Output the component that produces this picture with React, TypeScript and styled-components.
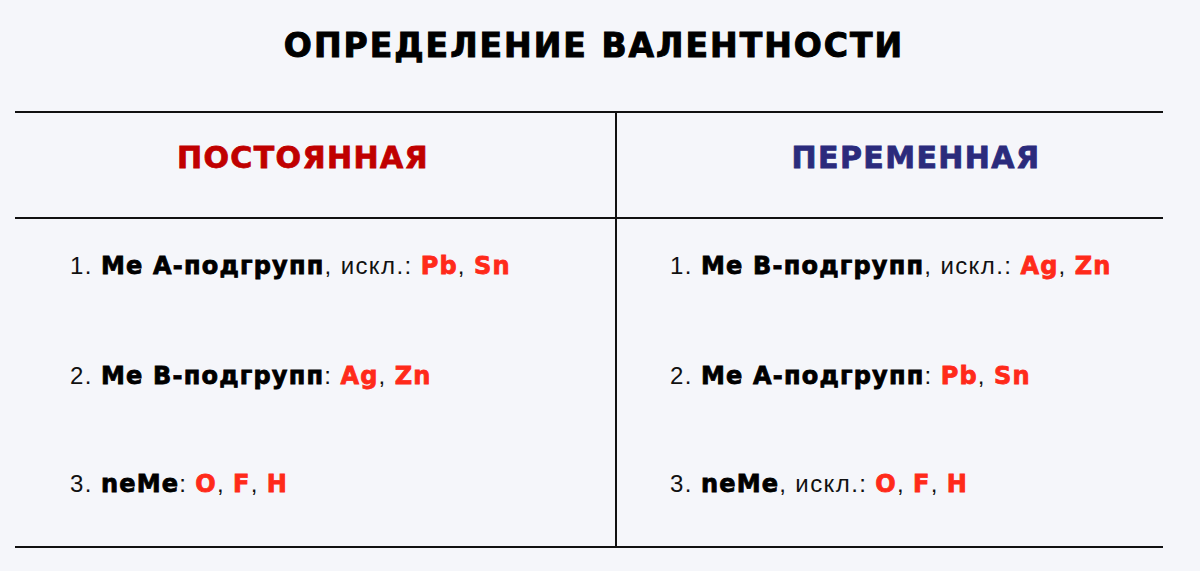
import styled, { createGlobalStyle } from 'styled-components'

const GlobalStyle = createGlobalStyle`
  html, body {
    margin: 0;
    padding: 0;
    background: #f5f6fa;
  }
`

type Part = { text: string; kind?: 'bold' | 'el' }

const constant: Part[][] = [
  [{ text: '1. ' }, { text: 'Me А-подгрупп', kind: 'bold' }, { text: ', искл.: ' }, { text: 'Pb', kind: 'el' }, { text: ', ' }, { text: 'Sn', kind: 'el' }],
  [{ text: '2. ' }, { text: 'Me В-подгрупп', kind: 'bold' }, { text: ': ' }, { text: 'Ag', kind: 'el' }, { text: ', ' }, { text: 'Zn', kind: 'el' }],
  [{ text: '3. ' }, { text: 'neMe', kind: 'bold' }, { text: ': ' }, { text: 'O', kind: 'el' }, { text: ', ' }, { text: 'F', kind: 'el' }, { text: ', ' }, { text: 'H', kind: 'el' }],
]

const variable: Part[][] = [
  [{ text: '1. ' }, { text: 'Me В-подгрупп', kind: 'bold' }, { text: ', искл.: ' }, { text: 'Ag', kind: 'el' }, { text: ', ' }, { text: 'Zn', kind: 'el' }],
  [{ text: '2. ' }, { text: 'Me А-подгрупп', kind: 'bold' }, { text: ': ' }, { text: 'Pb', kind: 'el' }, { text: ', ' }, { text: 'Sn', kind: 'el' }],
  [{ text: '3. ' }, { text: 'neMe', kind: 'bold' }, { text: ', искл.: ' }, { text: 'O', kind: 'el' }, { text: ', ' }, { text: 'F', kind: 'el' }, { text: ', ' }, { text: 'H', kind: 'el' }],
]

function Rule({ parts }: { parts: Part[] }) {
  return (
    <Line>
      {parts.map((p, i) =>
        p.kind === 'bold' ? (
          <Strong key={i}>{p.text}</Strong>
        ) : p.kind === 'el' ? (
          <Element key={i}>{p.text}</Element>
        ) : (
          <span key={i}>{p.text}</span>
        ),
      )}
    </Line>
  )
}

export default function App() {
  return (
    <Page>
      <GlobalStyle />
      <Title>ОПРЕДЕЛЕНИЕ ВАЛЕНТНОСТИ</Title>
      <Table>
        <HeadCell>
          <Heading $color="#c00000">ПОСТОЯННАЯ</Heading>
        </HeadCell>
        <HeadCell $last>
          <Heading $color="#2b2b7c">ПЕРЕМЕННАЯ</Heading>
        </HeadCell>
        <BodyCell>
          {constant.map((parts, i) => (
            <Rule key={i} parts={parts} />
          ))}
        </BodyCell>
        <BodyCell $last>
          {variable.map((parts, i) => (
            <Rule key={i} parts={parts} />
          ))}
        </BodyCell>
      </Table>
    </Page>
  )
}

const Page = styled.div`
  width: 1200px;
  height: 571px;
  padding-top: 24px;
  box-sizing: border-box;
`

const Title = styled.h1`
  margin: 0;
  height: 87px;
  padding-right: 12px;
  text-align: center;
  font-family: 'DejaVu Sans', sans-serif;
  font-weight: 700;
  font-size: 33px;
  letter-spacing: 2px;
  line-height: 44px;
  color: #000;
  -webkit-text-stroke: 1px #000;
`

const Table = styled.div`
  display: grid;
  grid-template-columns: 602px 546px;
  grid-template-rows: 106px 327px;
  margin-left: 15px;
  width: 1148px;
  border-top: 2px solid #111;
  border-bottom: 2px solid #111;
`

const HeadCell = styled.div<{ $last?: boolean }>`
  display: flex;
  align-items: center;
  justify-content: center;
  padding: ${(p) => (p.$last ? '0 0 0 52px' : '0 24px 0 0')};
  border-bottom: 2px solid #111;
  border-right: ${(p) => (p.$last ? 'none' : '2px solid #111')};
`

const Heading = styled.div<{ $color: string }>`
  font-family: 'DejaVu Sans', sans-serif;
  font-weight: 700;
  font-size: 30px;
  letter-spacing: 1.4px;
  color: ${(p) => p.$color};
  -webkit-text-stroke: 0.8px ${(p) => p.$color};
  margin-top: -16px;
`

const BodyCell = styled.div<{ $last?: boolean }>`
  display: flex;
  flex-direction: column;
  gap: 78px;
  padding: 32px 0 0 ${(p) => (p.$last ? '53px' : '55px')};
  border-right: ${(p) => (p.$last ? 'none' : '2px solid #111')};

  & > :nth-child(2) {
    margin-top: 2px;
  }
`

const Line = styled.div`
  font-family: 'Liberation Sans', Arial, sans-serif;
  font-size: 24px;
  letter-spacing: 1.4px;
  line-height: 30px;
  color: #111;
  white-space: nowrap;
`

const Strong = styled.span`
  font-family: 'DejaVu Sans', sans-serif;
  font-weight: 700;
  letter-spacing: 1.2px;
  -webkit-text-stroke: 0.8px #000;
  color: #000;
`

const Element = styled(Strong)`
  color: #ff2a1a;
  -webkit-text-stroke: 0.8px #ff2a1a;
`
